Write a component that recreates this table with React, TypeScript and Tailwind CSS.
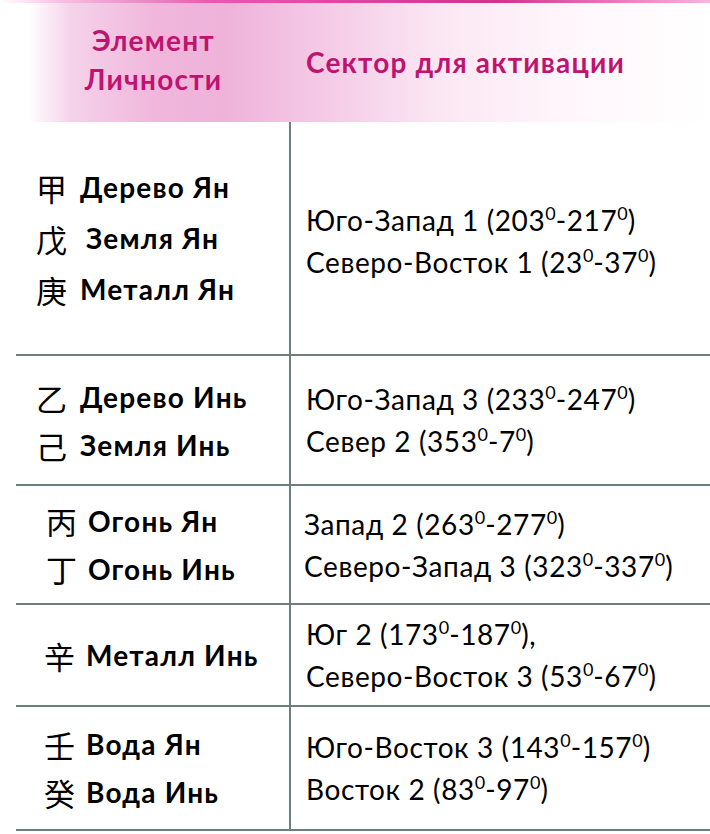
const rows = [
  {
    h: 'h-[234px]',
    left: [
      { ch: '甲', text: 'Дерево Ян', gap: 'ml-[12px]' },
      { ch: '戊', text: 'Земля Ян', gap: 'ml-[18px]' },
      { ch: '庚', text: 'Металл Ян', gap: 'ml-[12px]' },
    ],
    lh: 'leading-[51px]',
    lpad: 'pl-[20px]',
    right: [
      ['Юго-Запад 1 (203', '-217', ')'],
      ['Северо-Восток 1 (23', '-37', ')'],
    ],
    rpad: 'pl-[15px] pt-[6px]',
  },
  {
    h: 'h-[130px]',
    left: [
      { ch: '乙', text: 'Дерево Инь', gap: 'ml-[12px]' },
      { ch: '己', text: 'Земля Инь', gap: 'ml-[12px]' },
    ],
    lh: 'leading-[48px]',
    lpad: 'pl-[20px] pt-[2px]',
    right: [
      ['Юго-Запад 3 (233', '-247', ')'],
      ['Север 2 (353', '-7', ')'],
    ],
    rpad: 'pl-[15px]',
  },
  {
    h: 'h-[119px]',
    left: [
      { ch: '丙', text: 'Огонь Ян', gap: 'ml-[10px]' },
      { ch: '丁', text: 'Огонь Инь', gap: 'ml-[10px]' },
    ],
    lh: 'leading-[48px]',
    lpad: 'pl-[30px]',
    right: [
      ['Запад 2 (263', '-277', ')'],
      ['Северо-Запад 3 (323', '-337', ')'],
    ],
    rpad: 'pl-[13px]',
  },
  {
    h: 'h-[102px]',
    left: [{ ch: '辛', text: 'Металл Инь', gap: 'ml-[10px]' }],
    lh: 'leading-[48px]',
    lpad: 'pl-[28px]',
    right: [
      ['Юг 2 (173', '-187', '),'],
      ['Северо-Восток 3 (53', '-67', ')'],
    ],
    rpad: 'pl-[15px]',
  },
  {
    h: 'h-[124px]',
    left: [
      { ch: '壬', text: 'Вода Ян', gap: 'ml-[10px]' },
      { ch: '癸', text: 'Вода Инь', gap: 'ml-[10px]' },
    ],
    lh: 'leading-[48px]',
    lpad: 'pl-[28px]',
    right: [
      ['Юго-Восток 3 (143', '-157', ')'],
      ['Восток 2 (83', '-97', ')'],
    ],
    rpad: 'pl-[15px]',
  },
];

// degree mark drawn as a raised zero, like in the source table
const Deg = () => <span className="text-[18px] align-[11px] tracking-normal leading-none">0</span>;

export default function App() {
  return (
    <div className="w-[710px] h-[834px] bg-white font-['Lato','Noto_Sans_CJK_SC',sans-serif] text-black overflow-hidden">
      {/* header */}
      <div className="h-[3px] bg-[linear-gradient(90deg,#ffffff_0%,#f7c3e2_8%,#e65aae_30%,#d62f92_70%,#f6b6dc_100%)]" />
      <div className="h-[119px] flex items-center bg-[linear-gradient(90deg,#ffffff_4%,#f5d2ea_10%,#f0b6dc_22%,#efb3da_32%,#f4c9e6_45%,#fbe7f3_62%,#fff6fb_80%,#ffffff_100%)] text-[#c0136f] font-bold text-[28px] tracking-[1.2px]">
        <div className="w-[291px] pl-[16px] pb-[6px] text-center leading-[39px]">
          Элемент
          <br />
          Личности
        </div>
        <div className="pl-[15px] pb-[2px]">Сектор для активации</div>
      </div>

      {rows.map((r, i) => (
        <div key={i} className={`flex ${r.h} ml-[16px] border-b-2 border-[#6c7f7e]`}>
          <div className={`w-[273px] flex flex-col justify-center ${r.lpad} ${r.lh}`}>
            {r.left.map((l) => (
              <div key={l.ch} className="flex items-center">
                <span className="text-[31px] font-['Noto_Sans_CJK_SC',sans-serif] w-[32px] leading-none">{l.ch}</span>
                <span className={`${l.gap} font-bold text-[28px] tracking-[1.2px]`}>{l.text}</span>
              </div>
            ))}
          </div>
          <div className={`flex-1 border-l-2 border-[#6c7f7e] flex flex-col justify-center ${r.rpad} text-[28px] tracking-[0.6px] leading-[42px]`}>
            {r.right.map((t, j) => (
              <div key={j} className="whitespace-nowrap">
                {t[0]}
                <Deg />
                {t[1]}
                <Deg />
                {t[2]}
              </div>
            ))}
          </div>
        </div>
      ))}
    </div>
  );
}
